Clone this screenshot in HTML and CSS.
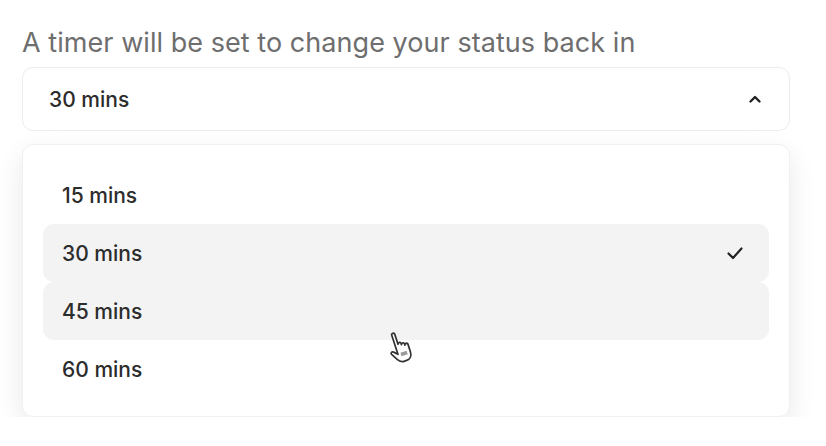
FILE: index.html
```html
<!DOCTYPE html>
<html lang="en">
<head>
    <meta charset="UTF-8">
    <meta name="viewport" content="width=device-width, initial-scale=1.0">
    <title>Status Timer</title>
    <link rel="stylesheet" href="styles.css">
</head>
<body>

    <div class="timer-field">
        <label class="field-label" for="timerSelect">A timer will be set to change your status back in</label>

        <div class="select-box" id="timerSelect">
            <span>30 mins</span>
            <svg class="chevron" width="16" height="16" viewBox="0 0 16 16">
                <path d="M3.5 10.5 L8 6 L12.5 10.5" fill="none" stroke="#222" stroke-width="2.4" stroke-linecap="round" stroke-linejoin="round"/>
            </svg>
        </div>

        <ul class="options">
            <li class="option">15 mins</li>
            <li class="option selected">30 mins
                <svg class="check" width="20" height="20" viewBox="0 0 20 20">
                    <path d="M3.5 10.5 L8 15 L16.5 5.5" fill="none" stroke="#222" stroke-width="2.2" stroke-linecap="round" stroke-linejoin="round"/>
                </svg>
            </li>
            <li class="option hover">45 mins
                <!-- mouse pointer over the hovered row -->
                <svg class="pointer" width="30" height="36" viewBox="0 0 20 25">
                    <g transform="rotate(-18 10 13)">
                        <path d="M7 3.5 C7 2.3 9.2 2.3 9.2 3.5 L9.2 11 C9.2 9.8 11.4 9.8 11.4 11 L11.4 12 C11.4 10.8 13.6 10.8 13.6 12 L13.6 13 C13.6 11.8 15.8 11.8 15.8 13 L15.8 18.5 C15.8 21.5 14 23.5 11.5 23.5 L9.5 23.5 C7.5 23.5 6.4 22.5 5.4 20.8 L2.8 16.3 C2.2 15.2 3.6 14.2 4.6 15.2 L7 17.6 Z" fill="#fff" stroke="#333" stroke-width="1.2" stroke-linejoin="round"/>
                        <rect x="9" y="17" width="4.5" height="2.6" fill="#9a9a9a"/>
                    </g>
                </svg>
            </li>
            <li class="option">60 mins</li>
        </ul>
    </div>

</body>
</html>
```

FILE: styles.css
```css
body {
    font-family: Inter, "Noto Sans", sans-serif;
    margin: 0;
    background-color: #fff;
    color: #2a2a2a;
}
.timer-field {
    padding: 27px 36px 0 22px;
}
.field-label {
    display: block;
    font-size: 27px;
    letter-spacing: 0.05px;
    color: #6e6e6e;
    line-height: 32px;
    margin-bottom: 8px;
}
.select-box {
    height: 62px;
    border: 1px solid #ececec;
    border-radius: 11px;
    display: flex;
    align-items: center;
    justify-content: space-between;
    padding: 0 26px 0 26px;
    font-size: 21px;
    font-weight: 500;
    color: #2c2c2c;
}
.chevron {
    display: block;
}
.options {
    list-style: none;
    margin: 13px 0 0;
    padding: 21px 20px 18px;
    border: 1px solid #f0f0f0;
    border-radius: 11px;
    box-shadow: 0 10px 28px rgba(0,0,0,0.09);
    position: relative;
}
.option {
    height: 58px;
    display: flex;
    align-items: center;
    justify-content: space-between;
    padding: 0 24px 0 19px;
    border-radius: 11px;
    font-size: 21px;
    font-weight: 500;
    color: #2c2c2c;
}
.option.selected,
.option.hover {
    background-color: #f3f3f3;
}
.check {
    display: block;
}
.pointer {
    position: absolute;
    left: 362px;
    top: 183px;
}
```
